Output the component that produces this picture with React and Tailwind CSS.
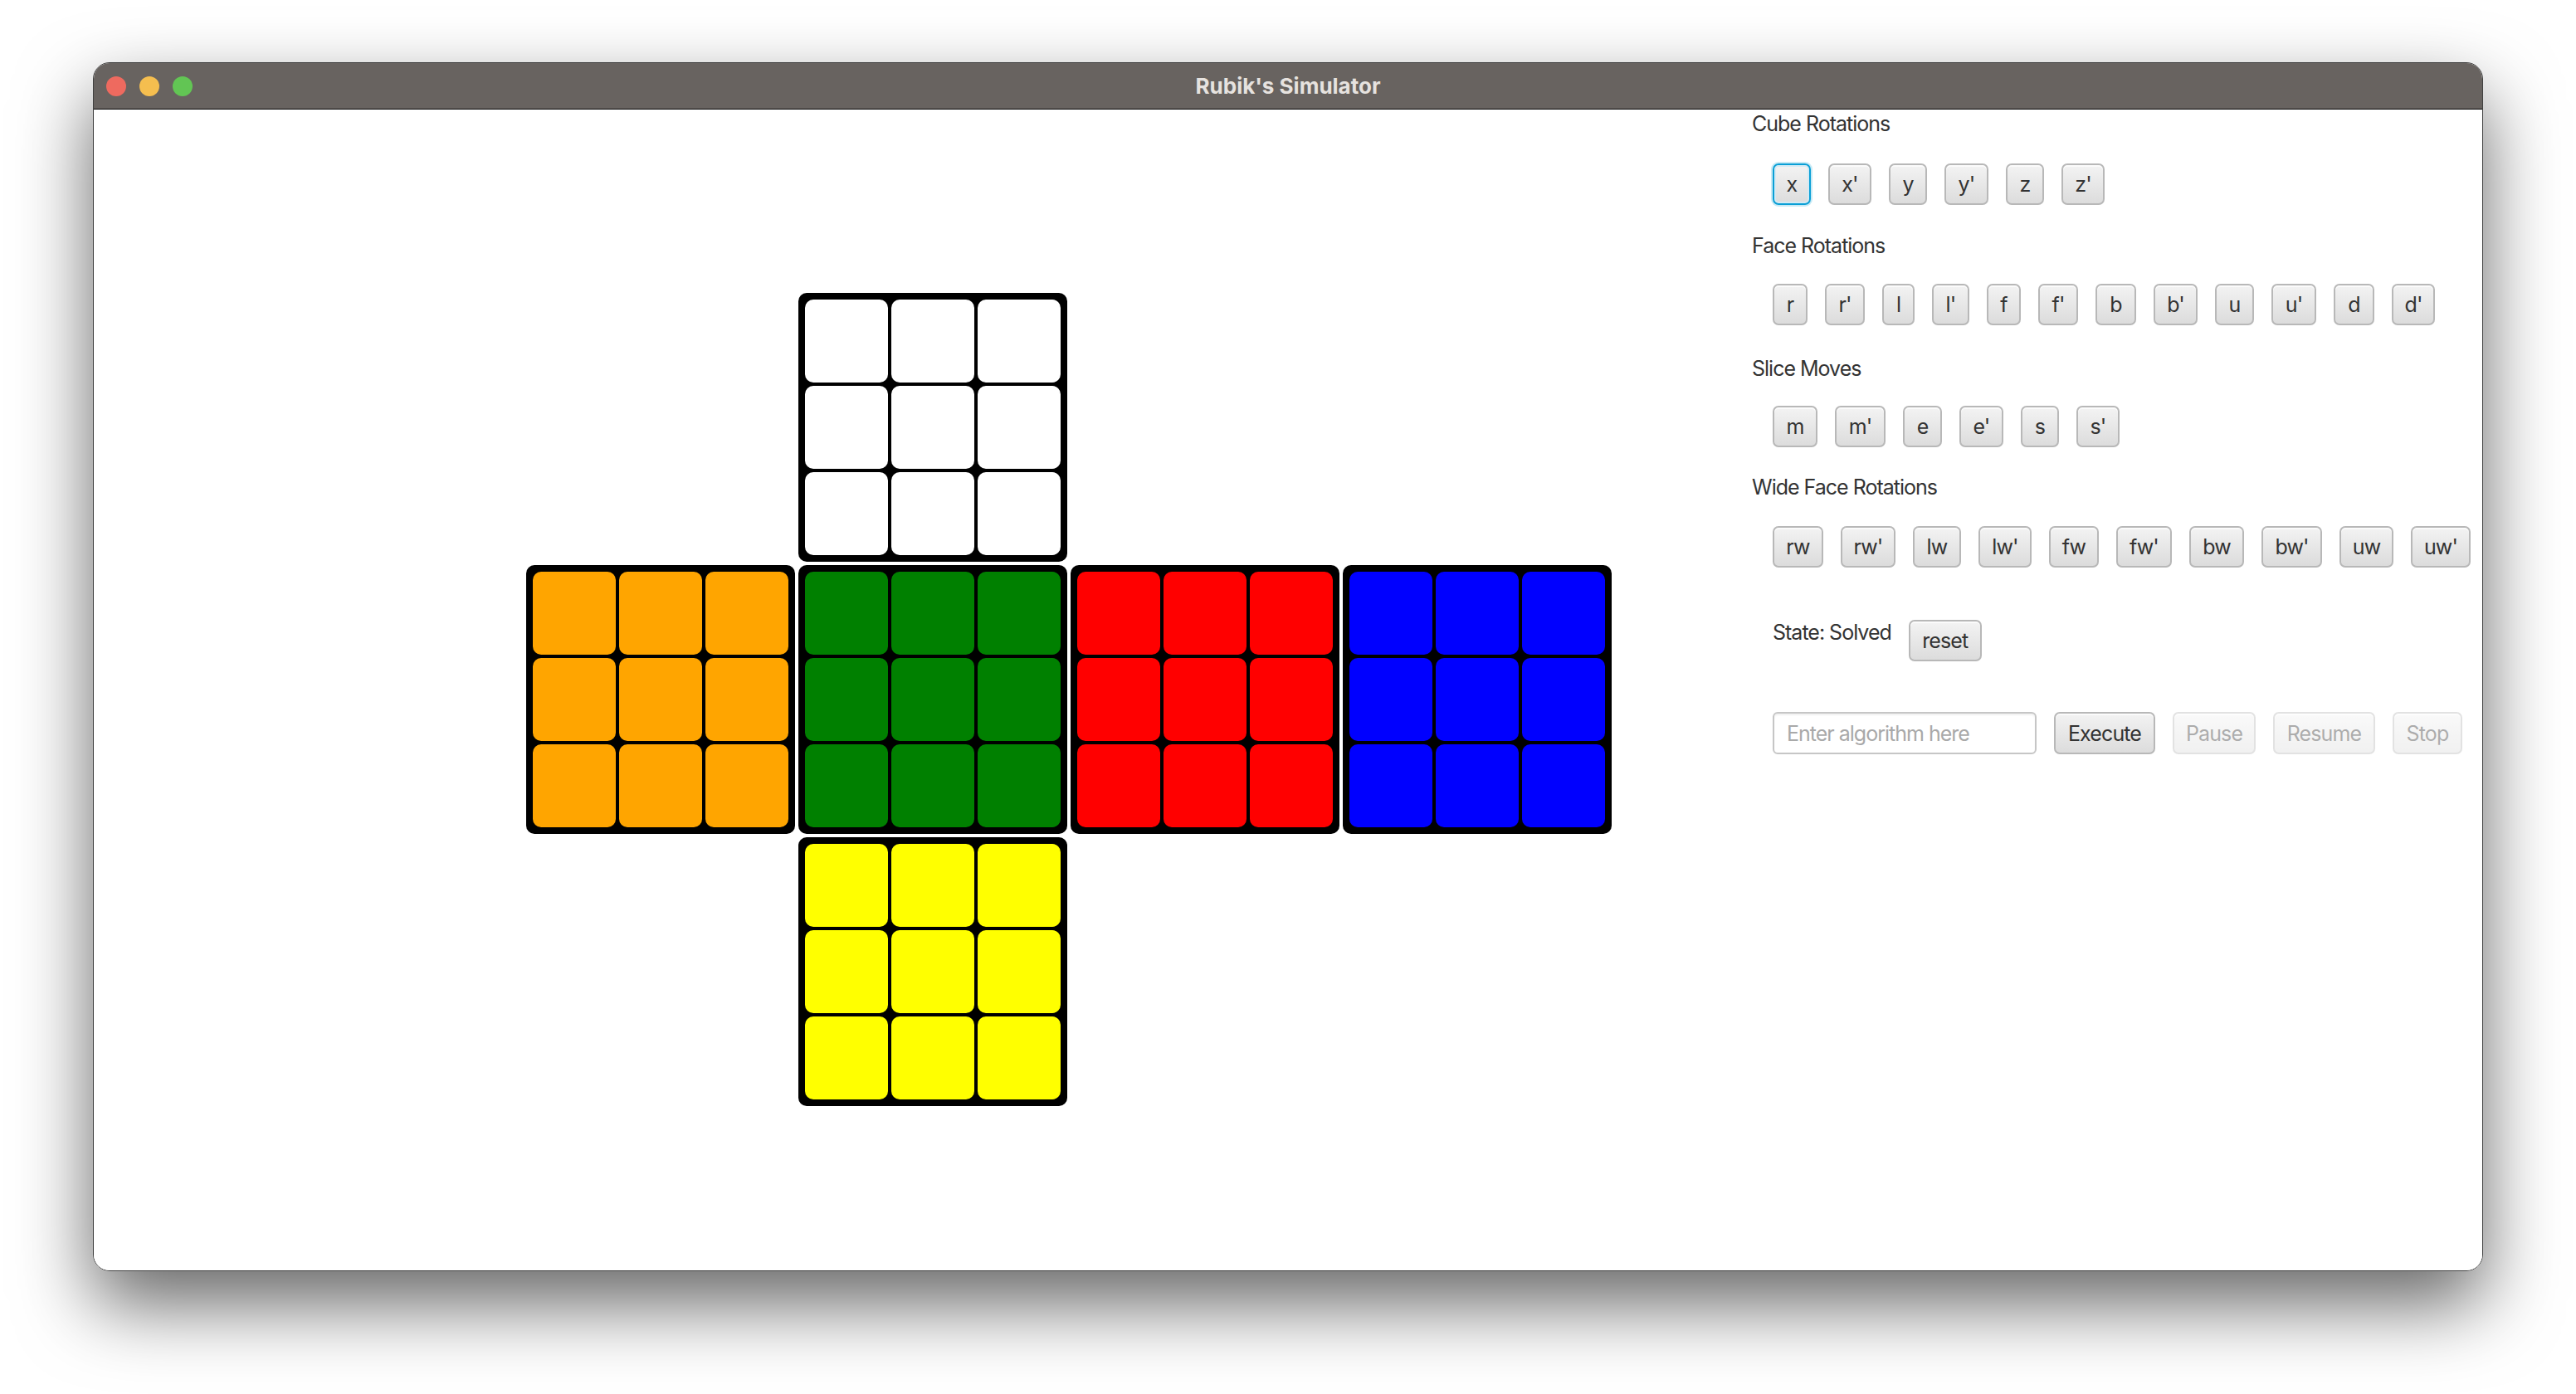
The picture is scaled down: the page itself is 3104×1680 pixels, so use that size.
import React from "react";

const cubeMoves = [
  { label: "x", w: "w-[46px]", focused: true },
  { label: "x'", w: "w-[52px]" },
  { label: "y", w: "w-[46px]" },
  { label: "y'", w: "w-[53px]" },
  { label: "z", w: "w-[46px]" },
  { label: "z'", w: "w-[52px]" },
];

const faceMoves = [
  { label: "r", w: "w-[42px]" },
  { label: "r'", w: "w-[48px]" },
  { label: "l", w: "w-[39px]" },
  { label: "l'", w: "w-[45px]" },
  { label: "f", w: "w-[41px]" },
  { label: "f'", w: "w-[48px]" },
  { label: "b", w: "w-[49px]" },
  { label: "b'", w: "w-[53px]" },
  { label: "u", w: "w-[47px]" },
  { label: "u'", w: "w-[54px]" },
  { label: "d", w: "w-[49px]" },
  { label: "d'", w: "w-[52px]" },
];

const sliceMoves = [
  { label: "m", w: "w-[54px]" },
  { label: "m'", w: "w-[61px]" },
  { label: "e", w: "w-[47px]" },
  { label: "e'", w: "w-[53px]" },
  { label: "s", w: "w-[46px]" },
  { label: "s'", w: "w-[52px]" },
];

const wideMoves = [
  { label: "rw", w: "w-[61px]" },
  { label: "rw'", w: "w-[66px]" },
  { label: "lw", w: "w-[58px]" },
  { label: "lw'", w: "w-[64px]" },
  { label: "fw", w: "w-[60px]" },
  { label: "fw'", w: "w-[67px]" },
  { label: "bw", w: "w-[66px]" },
  { label: "bw'", w: "w-[73px]" },
  { label: "uw", w: "w-[65px]" },
  { label: "uw'", w: "w-[72px]" },
];

const faces = [
  { color: "bg-white", pos: "col-start-2 row-start-1" },
  { color: "bg-[#ffa500]", pos: "col-start-1 row-start-2" },
  { color: "bg-[#008000]", pos: "col-start-2 row-start-2" },
  { color: "bg-[#ff0000]", pos: "col-start-3 row-start-2" },
  { color: "bg-[#0000ff]", pos: "col-start-4 row-start-2" },
  { color: "bg-[#ffff00]", pos: "col-start-2 row-start-3" },
];

function Face({ color, pos }) {
  return (
    <div className={`grid grid-cols-3 gap-[4px] rounded-[10px] bg-black p-[8px] ${pos}`}>
      {Array.from({ length: 9 }).map((_, i) => (
        <div key={i} className={`h-[100px] w-[100px] rounded-[10px] ${color}`} />
      ))}
    </div>
  );
}

function FxButton({ label, w, focused, disabled, h = "h-[50px]" }) {
  const base =
    "flex shrink-0 items-center justify-center rounded-[7px] border-2 bg-linear-to-b from-[#f3f3f3] to-[#dcdcdc] text-[25px] leading-[30px] tracking-[-0.035em] text-[#333333]";
  const state = focused
    ? "border-[#0a9fd6] shadow-[0_0_0_2px_rgba(3,158,211,0.22),inset_0_0_0_2px_#d3eaf4]"
    : "border-[#b8b8b8] shadow-[inset_0_2px_0_#fbfbfb]";
  return (
    <div className={`${base} ${state} ${w} ${h} ${disabled ? "opacity-40" : ""}`}>{label}</div>
  );
}

function Label({ children, className }) {
  return (
    <div className={`text-[25px] leading-[30px] tracking-[-0.04em] text-[#333333] ${className}`}>{children}</div>
  );
}

function Row({ items, className }) {
  return (
    <div className={`flex gap-[21px] pl-[25px] ${className}`}>
      {items.map((b) => (
        <FxButton key={b.label} {...b} />
      ))}
    </div>
  );
}

export default function App() {
  return (
    <div className="h-[1680px] w-[3104px] overflow-hidden bg-white pl-[112px] pt-[75px] font-['Inter',sans-serif]">
      <div className="w-[2880px] overflow-hidden rounded-[20px] border border-black/75 shadow-[0_40px_90px_rgba(0,0,0,0.6)]">
        <div className="relative flex h-[56px] items-center justify-center border-b border-black bg-[#686360]">
          <div className="absolute left-[15px] top-[16px] flex gap-[16px]">
            <div className="h-[24px] w-[24px] rounded-full bg-[#ee6a5f]" />
            <div className="h-[24px] w-[24px] rounded-full bg-[#f5be4f]" />
            <div className="h-[24px] w-[24px] rounded-full bg-[#62c554]" />
          </div>
          <div className="text-[26px] font-bold text-[#e6e2df]">Rubik's Simulator</div>
        </div>
        <div className="flex h-[1399px] bg-white">
          <div className="w-[1998px] shrink-0 pl-[521px] pt-[221px]">
            <div className="grid grid-cols-[repeat(4,324px)] grid-rows-[repeat(3,324px)] gap-[4px]">
              {faces.map((f) => (
                <Face key={f.color} {...f} />
              ))}
            </div>
          </div>
          <div className="flex flex-1 flex-col pt-[2px]">
            <Label>Cube Rotations</Label>
            <Row items={cubeMoves} className="mt-[33px]" />
            <Label className="mt-[34px]">Face Rotations</Label>
            <Row items={faceMoves} className="mt-[31px]" />
            <Label className="mt-[37px]">Slice Moves</Label>
            <Row items={sliceMoves} className="mt-[30px]" />
            <Label className="mt-[33px]">Wide Face Rotations</Label>
            <Row items={wideMoves} className="mt-[32px]" />
            <div className="mt-[63px] flex items-start gap-[21px] pl-[25px]">
              <Label>State: Solved</Label>
              <FxButton label="reset" w="w-[88px]" />
            </div>
            <div className="mt-[61px] flex gap-[21px] pl-[25px]">
              <input
                type="text"
                placeholder="Enter algorithm here"
                className="h-[51px] w-[318px] shrink-0 rounded-[6px] border-2 border-[#c6c6c6] bg-white pl-[15px] text-[25px] tracking-[-0.04em] text-[#333333] shadow-[inset_0_2px_2px_rgba(0,0,0,0.06)] outline-none placeholder:text-[#a9a9a9]"
              />
              <FxButton label="Execute" w="w-[122px]" h="h-[51px]" />
              <FxButton label="Pause" w="w-[100px]" h="h-[51px]" disabled />
              <FxButton label="Resume" w="w-[123px]" h="h-[51px]" disabled />
              <FxButton label="Stop" w="w-[84px]" h="h-[51px]" disabled />
            </div>
          </div>
        </div>
      </div>
    </div>
  );
}
